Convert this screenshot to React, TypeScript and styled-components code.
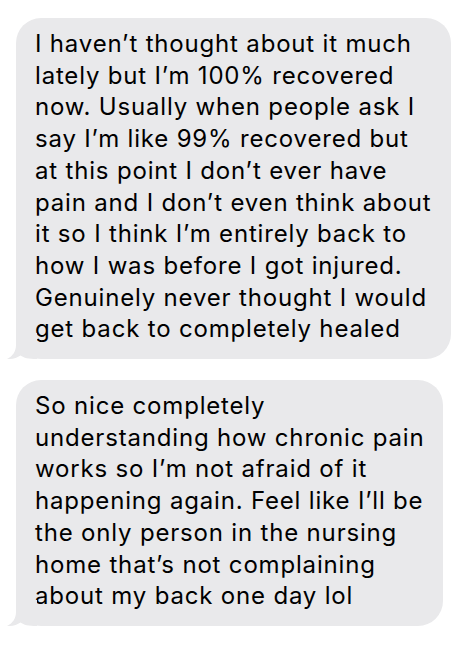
import React from "react";
import styled, { createGlobalStyle } from "styled-components";

const Global = createGlobalStyle`
  html, body { margin: 0; padding: 0; background: #ffffff; }
  body { font-family: Inter, "Noto Sans", "Liberation Sans", sans-serif; }
`;

const Thread = styled.div`
  display: flex;
  flex-direction: column;
  align-items: flex-start;
  gap: 21px;
  padding: 18px 0 0 16px;
`;

const Bubble = styled.div`
  position: relative;
  background: #e9e9eb;
  border-radius: 25px;
  padding: 10px 19px 14px 19px;
  color: #000;
  font-size: 24px;
  line-height: 31.7px;
  white-space: nowrap;
  letter-spacing: 0.82px;
`;

const Line = styled.span`
  display: block;
`;

const Tail = styled.svg`
  position: absolute;
  left: -9px;
  bottom: 0;
  width: 30px;
  height: 26px;
  display: block;
`;

const BubbleTail = () => (
  <Tail viewBox="0 0 30 26" aria-hidden="true">
    <path
      d="M9 0 L9 12 C9 18 6 23 0 26 C5 26.3 10 25 13.5 22.5 C17 25 21 26 30 26 L30 0 Z"
      fill="#e9e9eb"
    />
  </Tail>
);

const messages: string[][] = [
  [
    "I haven\u2019t thought about it much",
    "lately but I\u2019m 100% recovered",
    "now. Usually when people ask I",
    "say I\u2019m like 99% recovered but",
    "at this point I don\u2019t ever have",
    "pain and I don\u2019t even think about",
    "it so I think I\u2019m entirely back to",
    "how I was before I got injured.",
    "Genuinely never thought I would",
    "get back to completely healed",
  ],
  [
    "So nice completely",
    "understanding how chronic pain",
    "works so I\u2019m not afraid of it",
    "happening again. Feel like I\u2019ll be",
    "the only person in the nursing",
    "home that\u2019s not complaining",
    "about my back one day lol",
  ],
];

export default function App() {
  return (
    <>
      <Global />
      <Thread>
        {messages.map((lines, i) => (
          <Bubble key={i}>
            {lines.map((l, j) => (
              <Line key={j}>{l}</Line>
            ))}
            <BubbleTail />
          </Bubble>
        ))}
      </Thread>
    </>
  );
}
